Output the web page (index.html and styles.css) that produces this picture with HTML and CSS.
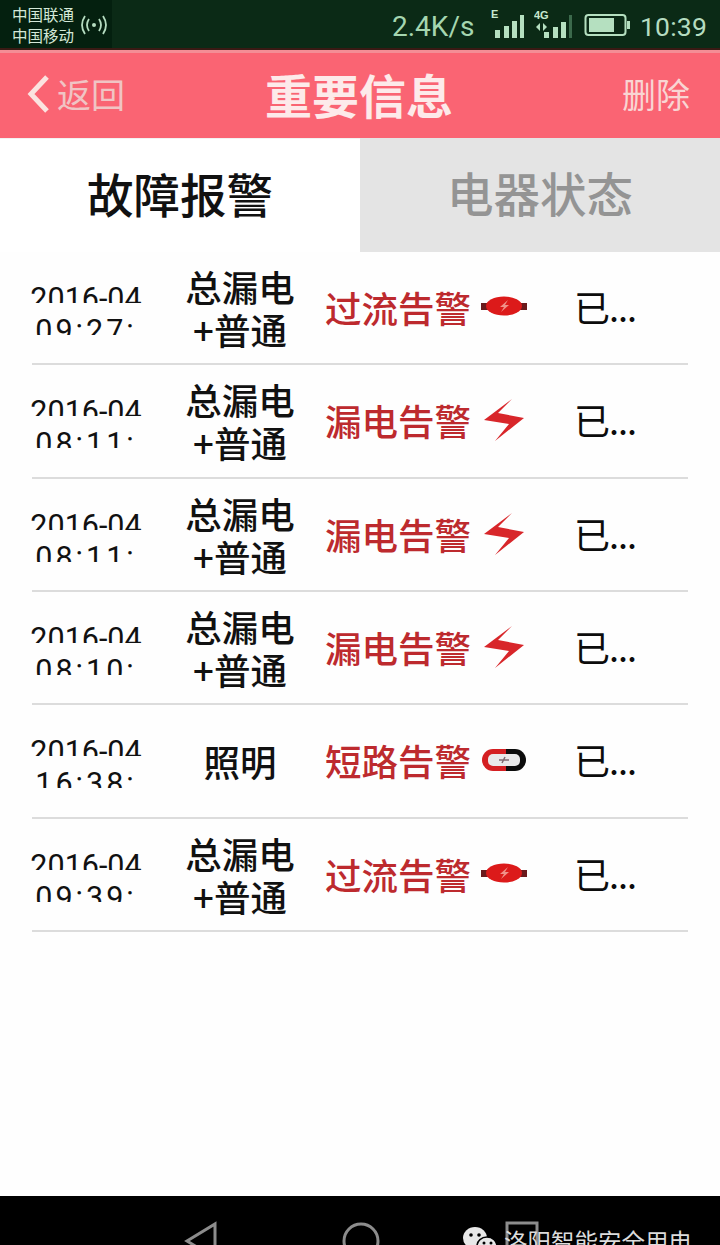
FILE: index.html
```html
<!DOCTYPE html>
<html lang="zh">
<head>
<meta charset="utf-8">
<title>重要信息</title>
<link rel="stylesheet" href="styles.css">
</head>
<body>
<svg class="defs" width="0" height="0" aria-hidden="true">
  <defs>
    <symbol id="i-over" viewBox="0 0 46 22">
      <rect x="0" y="8" width="46" height="7" fill="#6a1a1c"/>
      <ellipse cx="23" cy="11" rx="18" ry="9.500" fill="#dc1a1a"/>
      <path d="M27 5 L19 12 L23 12 L20 17 L28 10 L24 10 Z" fill="#f09088"/>
    </symbol>
    <symbol id="i-leak" viewBox="0 0 42 44">
      <path d="M29 1 L1 22 L26 26 L12 43 L41 20 L15 15 Z" fill="#d8262a"/>
    </symbol>
    <symbol id="i-short" viewBox="0 0 46 24">
      <path d="M25 1 H12 A11 11 0 0 0 12 23 H25 Z" fill="#d41f22"/>
      <path d="M25 1 H34 A11 11 0 0 1 34 23 H25 Z" fill="#0c0c0c"/>
      <rect x="7" y="6" width="32" height="12" rx="5" fill="#e9e9ea"/>
      <path d="M18 12 H28 M24 9 L21 15" stroke="#7d6a72" stroke-width="1.500" fill="none"/>
    </symbol>
  </defs>
</svg>
<div class="screen">
  <div class="status">
    <div class="status-left">
      <div class="carriers"><span>中国联通</span><span>中国移动</span></div>
      <svg class="hotspot" width="26" height="24" viewBox="0 0 26 24"><circle cx="13" cy="12" r="2" fill="#b5dcc0"/><path d="M8 6 Q4 12 8 18 M18 6 Q22 12 18 18 M4 3 Q-2 12 4 21 M22 3 Q28 12 22 21" fill="none" stroke="#b5dcc0" stroke-width="1.800"/></svg>
    </div>
    <div class="status-right">
      <span class="speed">2.4K/s</span>
      <svg class="sig1" width="34" height="30" viewBox="0 0 34 30"><text x="1" y="9" class="sig-label">E</text><g fill="#b5e0c0"><rect x="5" y="21" width="5" height="8"/><rect x="14" y="17" width="5" height="12"/><rect x="22" y="12" width="5" height="17"/><rect x="30" y="6" width="4" height="23"/></g></svg>
      <svg class="sig2" width="38" height="30" viewBox="0 0 38 30"><text x="0" y="10" class="sig-label">4G</text><g fill="#b5e0c0"><path d="M6 14 V22 L2 18 Z M9 14 V22 L13 18 Z"/><rect x="10" y="23" width="5" height="6"/><rect x="19" y="18" width="5" height="11"/><rect x="27" y="13" width="5" height="16"/></g><rect x="35" y="6" width="3" height="23" fill="#3c6a4c"/></svg>
      <svg class="batt" width="46" height="24" viewBox="0 0 46 24"><rect x="1.500" y="2" width="40" height="20" rx="3" fill="none" stroke="#b5e0c0" stroke-width="2"/><rect x="5" y="5" width="25" height="14" fill="#b5e0c0"/><rect x="43" y="8" width="3" height="8" fill="#b5e0c0"/></svg>
      <span class="clock">10:39</span>
    </div>
  </div>
  <header class="topbar">
    <div class="back">
      <svg class="chev" width="24" height="40" viewBox="0 0 24 40"><path d="M21 3 L5 20 L21 37" fill="none" stroke="#fbe3e0" stroke-width="5"/></svg>
      <span>返回</span>
    </div>
    <h1 class="title">重要信息</h1>
    <div class="del">删除</div>
  </header>
  <div class="tabs">
    <div class="tab tab-on">故障报警</div>
    <div class="tab tab-off">电器状态</div>
  </div>
  <div class="list">
    <div class="row">
      <div class="date"><div class="dl one">2016-04</div><div class="dl two">09:27:</div></div>
      <div class="type">总漏电<br>+普通</div>
      <div class="alarm"><span>过流告警</span><svg class="ic over"><use href="#i-over"/></svg></div>
      <div class="state">已...</div>
    </div>
    <div class="row">
      <div class="date"><div class="dl one">2016-04</div><div class="dl two">08:11:</div></div>
      <div class="type">总漏电<br>+普通</div>
      <div class="alarm"><span>漏电告警</span><svg class="ic leak"><use href="#i-leak"/></svg></div>
      <div class="state">已...</div>
    </div>
    <div class="row">
      <div class="date"><div class="dl one">2016-04</div><div class="dl two">08:11:</div></div>
      <div class="type">总漏电<br>+普通</div>
      <div class="alarm"><span>漏电告警</span><svg class="ic leak"><use href="#i-leak"/></svg></div>
      <div class="state">已...</div>
    </div>
    <div class="row">
      <div class="date"><div class="dl one">2016-04</div><div class="dl two">08:10:</div></div>
      <div class="type">总漏电<br>+普通</div>
      <div class="alarm"><span>漏电告警</span><svg class="ic leak"><use href="#i-leak"/></svg></div>
      <div class="state">已...</div>
    </div>
    <div class="row">
      <div class="date"><div class="dl one">2016-04</div><div class="dl two">16:38:</div></div>
      <div class="type">照明</div>
      <div class="alarm"><span>短路告警</span><svg class="ic short"><use href="#i-short"/></svg></div>
      <div class="state">已...</div>
    </div>
    <div class="row">
      <div class="date"><div class="dl one">2016-04</div><div class="dl two">09:39:</div></div>
      <div class="type">总漏电<br>+普通</div>
      <div class="alarm"><span>过流告警</span><svg class="ic over"><use href="#i-over"/></svg></div>
      <div class="state">已...</div>
    </div>
  </div>
  <nav class="navbar">
    <svg class="nav-back" width="34" height="40" viewBox="0 0 34 40"><path d="M31 3 V37 L3 20 Z" fill="none" stroke="#8c8c8c" stroke-width="3"/></svg>
    <svg class="nav-home" width="38" height="40" viewBox="0 0 38 40"><circle cx="19" cy="20" r="17" fill="none" stroke="#8c8c8c" stroke-width="3"/></svg>
    <svg class="nav-menu" width="34" height="40" viewBox="0 0 34 40"><rect x="2" y="2" width="30" height="36" fill="none" stroke="#8c8c8c" stroke-width="3"/></svg>
    <div class="mark">
      <svg class="wx" width="36" height="28" viewBox="0 0 36 28"><ellipse cx="13" cy="12" rx="12" ry="11" fill="#e8e8e8"/><ellipse cx="25" cy="20" rx="10" ry="9" fill="#e8e8e8" stroke="#000" stroke-width="1.500"/><circle cx="9" cy="9" r="1.800" fill="#000"/><circle cx="17" cy="9" r="1.800" fill="#000"/><circle cx="22" cy="17" r="1.500" fill="#000"/><circle cx="29" cy="17" r="1.500" fill="#000"/></svg>
      <span>洛阳智能安全用电</span>
    </div>
  </nav>
</div>
</body>
</html>
```
FILE: styles.css
```css
* { box-sizing: border-box; }
html, body { margin: 0; padding: 0; background: #fff; }
.defs { position: absolute; }
.screen {
  width: 720px; height: 1245px; overflow: hidden; position: relative;
  display: flex; flex-direction: column;
  font-family: "Noto Sans CJK SC", "Noto Sans", sans-serif;
  background: #fefefe;
}
.status {
  height: 50px; flex: none; display: flex; justify-content: space-between; align-items: stretch;
  background: #0b2a16; border-bottom: 2px solid #3a1a14; color: #b5e0c0;
}
.status-left { display: flex; align-items: center; width: 112px; padding-left: 12px; padding-top: 1px; background: #04200f; }
.carriers { display: flex; flex-direction: column; font-size: 15.500px; line-height: 21px; width: 70px; color: #d4e8d8; flex: none; }
.hotspot { margin-left: -1px; flex: none; }
.status-right { display: flex; align-items: center; padding-right: 13px; padding-top: 5px; font-family: Roboto, sans-serif; }
.speed { font-size: 28px; color: #a5d6b0; width: 98px; }
.sig1 { flex: none; margin-top: -6px; margin-right: 10px; }
.sig2 { flex: none; margin-top: -6px; margin-right: 12px; }
.sig-label { font: bold 11px "Liberation Sans", sans-serif; fill: #c8e8d0; }
.batt { flex: none; margin-right: 10px; margin-top: -4px; }
.clock { font-size: 26.500px; color: #b5dcc0; letter-spacing: .2px; margin-top: -1px; }

.topbar {
  height: 88px; flex: none; display: flex; align-items: center; justify-content: space-between;
  padding: 0 30px 4px 26px; position: relative;
  background: #fa6473; border-top: 3px solid #f48d95; color: #fbe3e0;
}
.back { display: flex; align-items: center; font-size: 34px; color: #f0c4c4; width: 100px; gap: 7px; }
.back span { line-height: 1; }
.chev { flex: none; }
.title { margin: 0; font-size: 47px; font-weight: 700; line-height: 1; color: #fdeaea; margin-left: -30px; }
.del { font-size: 34px; line-height: 1; color: #f9d5d3; }

.tabs { height: 114px; flex: none; display: flex; }
.tab { flex: 1; display: flex; align-items: center; justify-content: center; font-size: 46.500px; line-height: 1; padding-bottom: 5px; }
.tab-on { background: #fff; color: #111; font-weight: 500; border-top: 1px solid #f2f2f2; }
.tab-off { background: #e4e4e4; color: #949494; font-weight: 500; }

.list { flex: 1; display: block; padding: 0 32px; }
.row {
  height: 113.330px; display: flex; align-items: center; padding-top: 1px;
  border-bottom: 2px solid #dcdcdc;
}
.date { width: 116px; margin-left: -4px; flex: none; font-family: Roboto, sans-serif; color: #111; text-align: center; display: flex; flex-direction: column; gap: 10px; }
.dl { height: 22px; overflow: hidden; white-space: nowrap; font-size: 30.500px; line-height: 36px; }
.two { letter-spacing: 3px; }
.type { width: 112px; margin-left: 40px; flex: none; text-align: center; font-size: 36.500px; line-height: 43px; color: #111; font-weight: 500; }
.alarm { width: 252px; margin-left: 29px; flex: none; display: flex; align-items: center; font-size: 36.500px; line-height: 1; color: #bd2a2e; font-weight: 500; }
.ic { flex: none; display: block; }
.over { width: 46px; height: 22px; margin-left: 10px; margin-top: -4px; }
.leak { width: 42px; height: 44px; margin-left: 12px; margin-top: -2px; }
.short { width: 46px; height: 24px; margin-left: 10px; margin-top: -3px; }
.state { font-size: 36px; line-height: 1; color: #0c0c0c; white-space: nowrap; margin-left: -3px; margin-top: -4px; letter-spacing: -1px; }

.navbar { height: 49px; flex: none; background: #000; position: relative; display: flex; align-items: flex-start; padding-top: 25px; padding-left: 184px; }
.nav-back { flex: none; }
.nav-home { flex: none; margin-left: 124px; }
.nav-menu { flex: none; margin-left: 125px; }
.mark { position: absolute; left: 462px; top: 30px; display: flex; align-items: flex-start; gap: 6px; color: #dcdcdc; font-size: 23.500px; line-height: 30px; white-space: nowrap; }
.wx { flex: none; }
```
